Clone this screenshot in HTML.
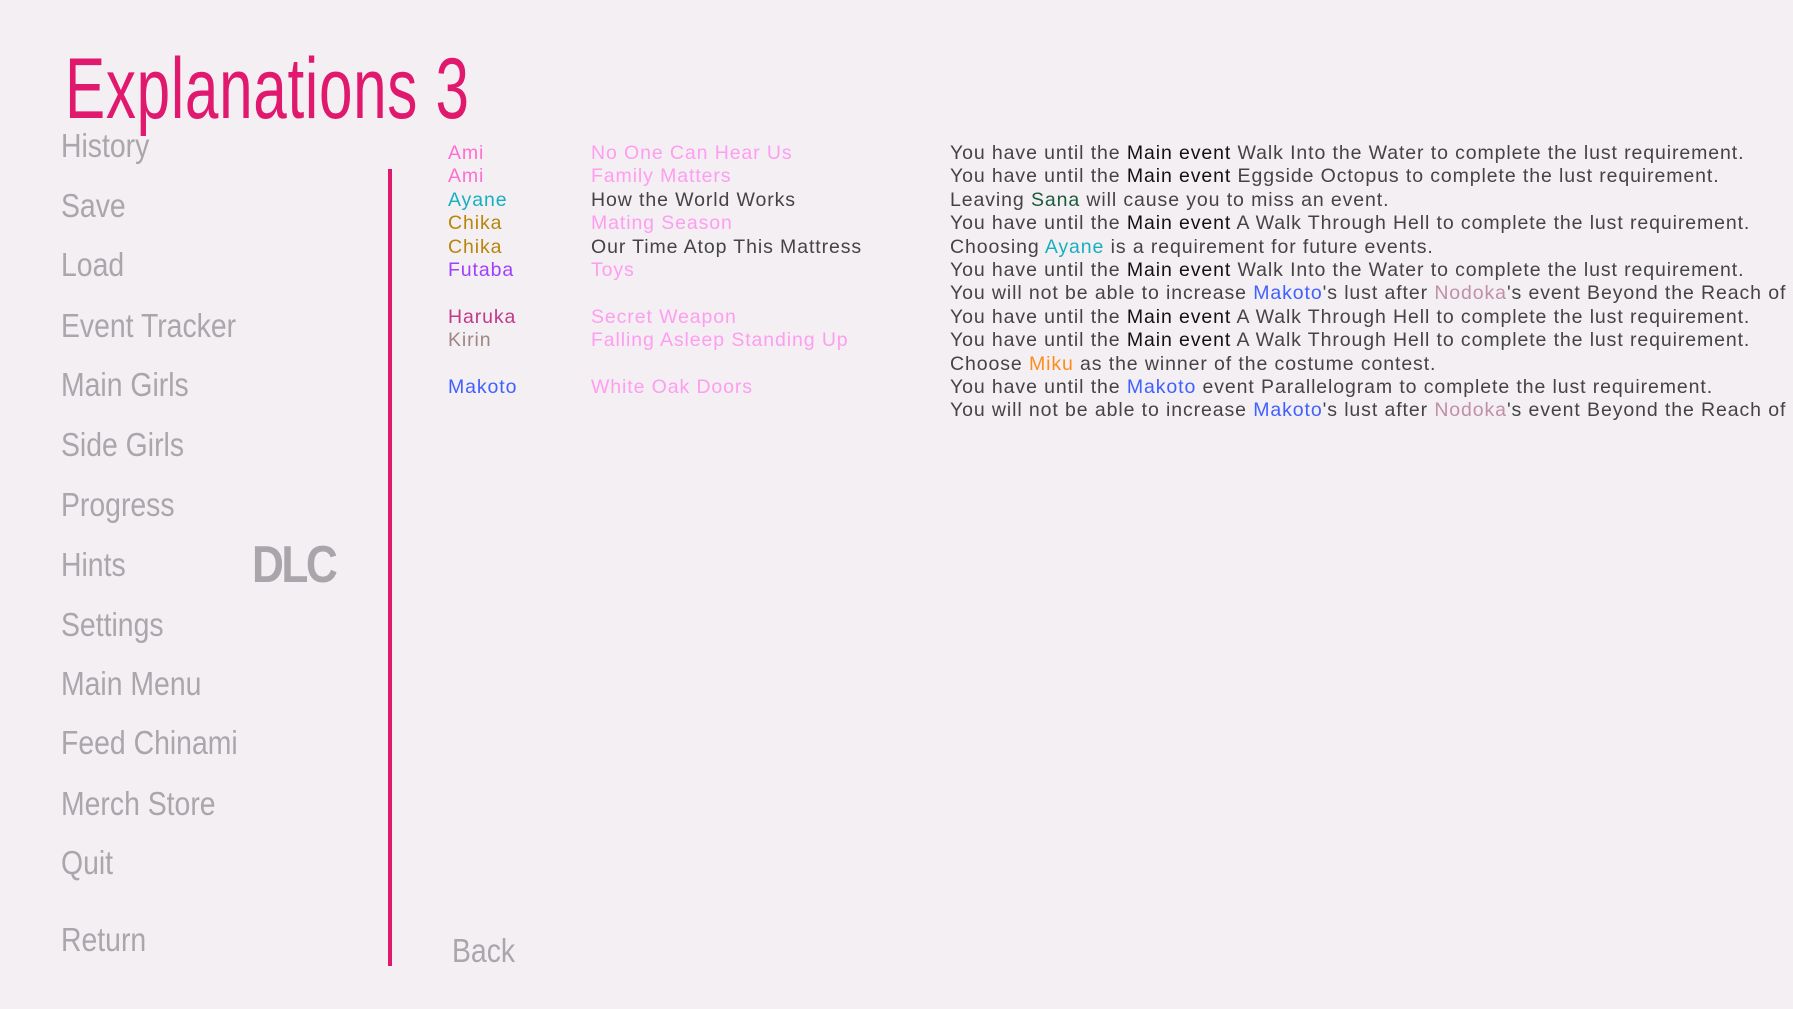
<!DOCTYPE html>
<html><head><meta charset="utf-8"><style>
html,body{margin:0;padding:0;width:1793px;height:1009px;overflow:hidden;background:#f3eff3;font-family:"Liberation Sans",sans-serif}
.a{position:absolute;white-space:nowrap}
.t{left:65px;top:40px;font-size:86px;color:#e0196e;transform:scaleX(.70);transform-origin:left top;letter-spacing:1px}
.m{left:61px;font-size:33px;color:#aaa6ab;transform:scaleX(.86);transform-origin:left center;line-height:40px;margin-top:-19px}
.dlc{left:252px;top:535px;font-size:52px;font-weight:bold;color:#a9a5aa;transform:scaleX(.85);transform-origin:left top;letter-spacing:-3px}
.line{left:388px;top:169px;width:4px;height:797px;background:#e0196e}
.r{font-size:19.5px;line-height:23.4px;color:#444;letter-spacing:.9px}
.c1{left:448px;top:142px}.c2{left:591px;top:142px}.c3{left:950px;top:142px}
.p{color:#ff9df0}.k{color:#111}
</style></head><body>
<div class="a t">Explanations 3</div>
<div class="a m" style="top:145px">History</div>
<div class="a m" style="top:205px">Save</div>
<div class="a m" style="top:264px">Load</div>
<div class="a m" style="top:325px">Event Tracker</div>
<div class="a m" style="top:384px">Main Girls</div>
<div class="a m" style="top:444px">Side Girls</div>
<div class="a m" style="top:504px">Progress</div>
<div class="a m" style="top:564px">Hints</div>
<div class="a m" style="top:624px">Settings</div>
<div class="a m" style="top:683px">Main Menu</div>
<div class="a m" style="top:742px">Feed Chinami</div>
<div class="a m" style="top:803px">Merch Store</div>
<div class="a m" style="top:862px">Quit</div>
<div class="a m" style="top:939px">Return</div>
<div class="a m" style="top:950px;left:452px">Back</div>
<div class="a dlc">DLC</div>
<div class="a line"></div>
<div class="a r c1">
<div style="color:#ff6ed0">Ami</div>
<div style="color:#ff6ed0">Ami</div>
<div style="color:#17b0bf">Ayane</div>
<div style="color:#b8860b">Chika</div>
<div style="color:#b8860b">Chika</div>
<div style="color:#a040ff">Futaba</div>
<div>&nbsp;</div>
<div style="color:#c03a8a">Haruka</div>
<div style="color:#a08585">Kirin</div>
<div>&nbsp;</div>
<div style="color:#4060ff">Makoto</div>
</div>
<div class="a r c2">
<div class="p">No One Can Hear Us</div>
<div class="p">Family Matters</div>
<div>How the World Works</div>
<div class="p">Mating Season</div>
<div>Our Time Atop This Mattress</div>
<div class="p">Toys</div>
<div>&nbsp;</div>
<div class="p">Secret Weapon</div>
<div class="p">Falling Asleep Standing Up</div>
<div>&nbsp;</div>
<div class="p">White Oak Doors</div>
</div>
<div class="a r c3">
<div>You have until the <span class="k">Main event</span> Walk Into the Water to complete the lust requirement.</div>
<div>You have until the <span class="k">Main event</span> Eggside Octopus to complete the lust requirement.</div>
<div>Leaving <span style="color:#1a5c3c">Sana</span> will cause you to miss an event.</div>
<div>You have until the <span class="k">Main event</span> A Walk Through Hell to complete the lust requirement.</div>
<div>Choosing <span style="color:#17b0bf">Ayane</span> is a requirement for future events.</div>
<div>You have until the <span class="k">Main event</span> Walk Into the Water to complete the lust requirement.</div>
<div>You will not be able to increase <span style="color:#4060ff">Makoto</span>'s lust after <span style="color:#c090a5">Nodoka</span>'s event Beyond the Reach of God.</div>
<div>You have until the <span class="k">Main event</span> A Walk Through Hell to complete the lust requirement.</div>
<div>You have until the <span class="k">Main event</span> A Walk Through Hell to complete the lust requirement.</div>
<div>Choose <span style="color:#ff8c1a">Miku</span> as the winner of the costume contest.</div>
<div>You have until the <span style="color:#4060ff">Makoto</span> event Parallelogram to complete the lust requirement.</div>
<div>You will not be able to increase <span style="color:#4060ff">Makoto</span>'s lust after <span style="color:#c090a5">Nodoka</span>'s event Beyond the Reach of God.</div>
</div>
</body></html>
